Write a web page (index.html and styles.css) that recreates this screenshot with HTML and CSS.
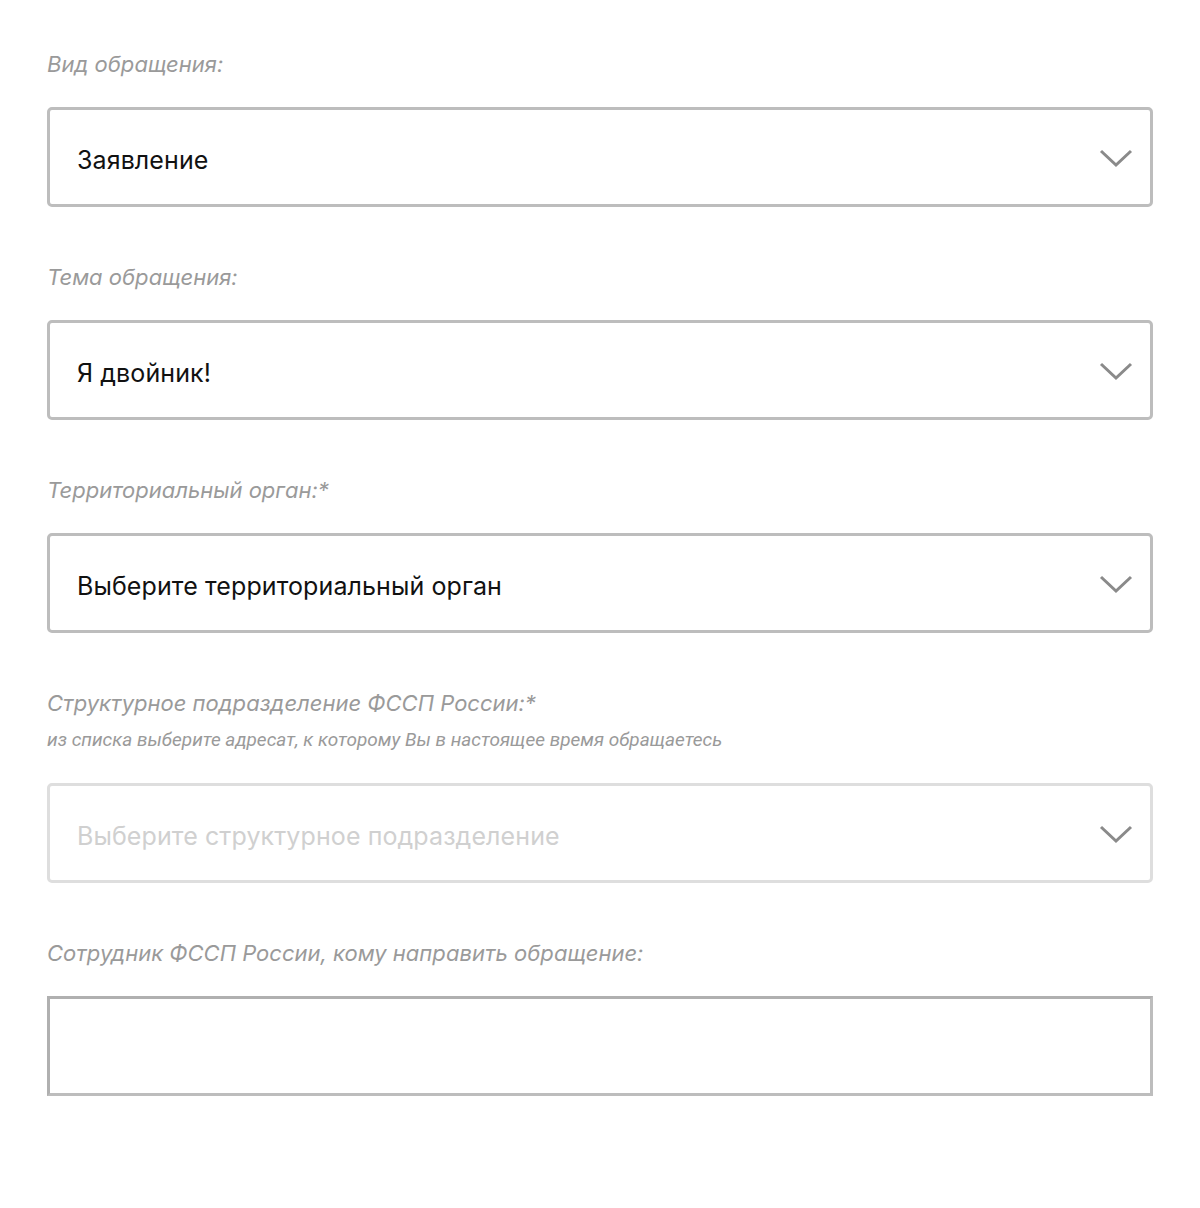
FILE: index.html
```html
<!DOCTYPE html>
<html lang="ru">
<head>
<meta charset="utf-8">
<link rel="stylesheet" href="styles.css">
</head>
<body>
<form class="form">
  <div class="field">
    <div class="label">Вид обращения:</div>
    <div class="select">
      <span class="value">Заявление</span>
      <svg class="chev" width="34" height="20" viewBox="0 0 34 20"><path d="M2 3 L17 17 L32 3" fill="none" stroke="#8a8a8a" stroke-width="3"/></svg>
    </div>
  </div>
  <div class="field">
    <div class="label">Тема обращения:</div>
    <div class="select">
      <span class="value">Я двойник!</span>
      <svg class="chev" width="34" height="20" viewBox="0 0 34 20"><path d="M2 3 L17 17 L32 3" fill="none" stroke="#8a8a8a" stroke-width="3"/></svg>
    </div>
  </div>
  <div class="field">
    <div class="label">Территориальный орган:*</div>
    <div class="select">
      <span class="value">Выберите территориальный орган</span>
      <svg class="chev" width="34" height="20" viewBox="0 0 34 20"><path d="M2 3 L17 17 L32 3" fill="none" stroke="#8a8a8a" stroke-width="3"/></svg>
    </div>
  </div>
  <div class="field">
    <div class="label">Структурное подразделение ФССП России:*</div>
    <div class="hint">из списка выберите адресат, к которому Вы в настоящее время обращаетесь</div>
    <div class="select disabled">
      <span class="value">Выберите структурное подразделение</span>
      <svg class="chev" width="34" height="20" viewBox="0 0 34 20"><path d="M2 3 L17 17 L32 3" fill="none" stroke="#8a8a8a" stroke-width="3"/></svg>
    </div>
  </div>
  <div class="field">
    <div class="label">Сотрудник ФССП России, кому направить обращение:</div>
    <div class="input"></div>
  </div>
</form>
</body>
</html>
```
FILE: styles.css
```css
html, body {
  margin: 0;
  padding: 0;
  background: #fff;
}
body {
  font-family: Inter, Roboto, "Noto Sans", sans-serif;
}
.form {
  padding: 49px 47px 0 47px;
  display: flex;
  flex-direction: column;
  gap: 55px;
}
.field {
  display: flex;
  flex-direction: column;
}
.label {
  font-style: italic;
  font-size: 22px;
  line-height: 30px;
  color: #9a9a9a;
  margin-bottom: 28px;
}
.hint {
  font-family: Roboto, sans-serif;
  font-style: italic;
  font-size: 19px;
  line-height: 22px;
  color: #9a9a9a;
  margin-top: -17px;
  margin-bottom: 32px;
}
.select {
  box-sizing: border-box;
  height: 100px;
  border: 3px solid #bdbdbd;
  border-radius: 5px;
  display: flex;
  align-items: center;
  justify-content: space-between;
  padding: 6px 17px 0 27px;
}
.value {
  font-size: 25px;
  letter-spacing: 0.1px;
  color: #111;
}
.select.disabled {
  border-color: #dedede;
}
.select.disabled .value {
  color: #d0d0d0;
}
.chev {
  display: block;
  margin-top: -4px;
}
.input {
  box-sizing: border-box;
  height: 100px;
  border: 3px solid #bdbdbd;
  border-top-color: #b0b0b0;
  border-left-color: #b0b0b0;
}
```
